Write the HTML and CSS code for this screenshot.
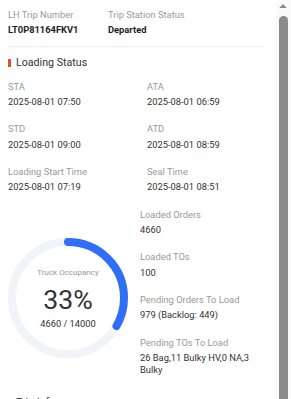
FILE: index.html
```html
<!DOCTYPE html>
<html lang="en">
<head>
<meta charset="utf-8">
<title>Trip Detail</title>
<link rel="stylesheet" href="styles.css">
</head>
<body>
<div class="frame">
  <div class="panel">
    <div class="trip-head">
      <div class="field trip-no">
        <div class="label">LH Trip Number</div>
        <div class="value strong">LT0P81164FKV1</div>
      </div>
      <div class="field">
        <div class="label">Trip Station Status</div>
        <div class="value strong">Departed</div>
      </div>
    </div>

    <section class="section">
      <h2 class="section-title">Loading Status</h2>
      <div class="times">
        <div class="field"><div class="label">STA</div><div class="value">2025-08-01 07:50</div></div>
        <div class="field"><div class="label">ATA</div><div class="value">2025-08-01 06:59</div></div>
        <div class="field"><div class="label">STD</div><div class="value">2025-08-01 09:00</div></div>
        <div class="field"><div class="label">ATD</div><div class="value">2025-08-01 08:59</div></div>
        <div class="field"><div class="label">Loading Start Time</div><div class="value">2025-08-01 07:19</div></div>
        <div class="field"><div class="label">Seal Time</div><div class="value">2025-08-01 08:51</div></div>
      </div>

      <div class="loaded">
        <div class="gauge">
          <svg class="gauge-ring" width="120" height="120" viewBox="0 0 120 120">
            <circle cx="60" cy="60" r="56" fill="none" stroke="#f2f3f8" stroke-width="8"/>
            <circle cx="60" cy="60" r="56" fill="none" stroke="#2f6ef6" stroke-width="8" stroke-linecap="round" stroke-dasharray="117.1 400" transform="rotate(-90 60 60)"/>
          </svg>
          <div class="gauge-text">
            <div class="gauge-caption">Truck Occupancy</div>
            <div class="gauge-pct">33%</div>
            <div class="gauge-sub">4660 / 14000</div>
          </div>
        </div>
        <div class="loaded-list">
          <div class="field"><div class="label">Loaded Orders</div><div class="value">4660</div></div>
          <div class="field"><div class="label">Loaded TOs</div><div class="value">100</div></div>
          <div class="field"><div class="label">Pending Orders To Load</div><div class="value">979 (Backlog: 449)</div></div>
          <div class="field"><div class="label">Pending TOs To Load</div><div class="value">26 Bag,11 Bulky HV,0 NA,3 Bulky</div></div>
        </div>
      </div>
    </section>

    <section class="section trip-info">
      <h2 class="section-title">Trip Info</h2>
      <div class="times">
        <div class="field"><div class="label">Origin</div><div class="value">SOC</div></div>
        <div class="field"><div class="label">Destination</div><div class="value">LM Hub</div></div>
      </div>
    </section>
  </div>

  <div class="scrollbar" aria-hidden="true">
    <div class="sb-up">
      <svg width="15" height="15" viewBox="0 0 15 15"><path d="M3.2 8 L7 4 L10.8 8 Z" fill="#8a8a8a"/></svg>
    </div>
    <div class="sb-thumb"></div>
  </div>
</div>
</body>
</html>
```

FILE: styles.css
```css
html, body {
  margin: 0;
  padding: 0;
  background: #ffffff;
}

body {
  font-family: Roboto, "Liberation Sans", Arial, sans-serif;
  color: #333333;
}

.frame {
  display: flex;
  height: 399px;
  overflow: hidden;
}

.panel {
  flex: 1;
  min-width: 0;
  padding: 9px 11px 40px 8px;
}

.scrollbar {
  width: 15px;
  flex-shrink: 0;
  display: flex;
  flex-direction: column;
  background: #fafafa;
}

.sb-up {
  height: 15px;
  display: flex;
}

.sb-thumb {
  flex: 1;
  margin: 1px 3px 0;
  background: #8b8b8b;
  border-radius: 5px 5px 0 0;
}

.trip-head {
  display: flex;
  padding-bottom: 10px;
  border-bottom: 1px solid #eeeff2;
}

.trip-no {
  width: 100px;
}

.field {
  display: flex;
  flex-direction: column;
  gap: 3.33px;
}

.label {
  font-size: 9.33px;
  line-height: 12px;
  color: #999999;
}

.value {
  font-size: 9.33px;
  line-height: 12px;
  color: #333333;
}

.value.strong {
  font-weight: 700;
  color: #222222;
}

.section-title {
  margin: 7.5px 0 0;
  font-size: 10.67px;
  line-height: 16px;
  font-weight: 400;
  color: #333333;
  display: flex;
  align-items: center;
  gap: 5px;
}

.section-title::before {
  content: "";
  width: 3px;
  height: 8px;
  background: #ee4d2d;
}

.times {
  display: grid;
  grid-template-columns: 139px 1fr;
  row-gap: 15.33px;
  margin-top: 10px;
}

.loaded {
  display: flex;
  gap: 12px;
  margin-top: 15.33px;
}

.gauge {
  display: grid;
  place-items: center;
  width: 120px;
  height: 120px;
  flex-shrink: 0;
  align-self: center;
  margin-top: 12px;
}

.gauge-ring,
.gauge-text {
  grid-area: 1 / 1;
}

.gauge-text {
  display: flex;
  flex-direction: column;
  align-items: center;
}

.gauge-caption {
  font-size: 8px;
  line-height: 12px;
  color: #999999;
}

.gauge-pct {
  margin-top: 6px;
  font-size: 26.67px;
  line-height: 30px;
  color: #333333;
}

.gauge-sub {
  margin-top: 3px;
  font-size: 9.33px;
  line-height: 12px;
  color: #333333;
}

.loaded-list {
  flex: 1;
  display: flex;
  flex-direction: column;
  gap: 15.33px;
}

.trip-info {
  margin-top: 19px;
}

.trip-info .section-title {
  margin-top: 0;
}
```
